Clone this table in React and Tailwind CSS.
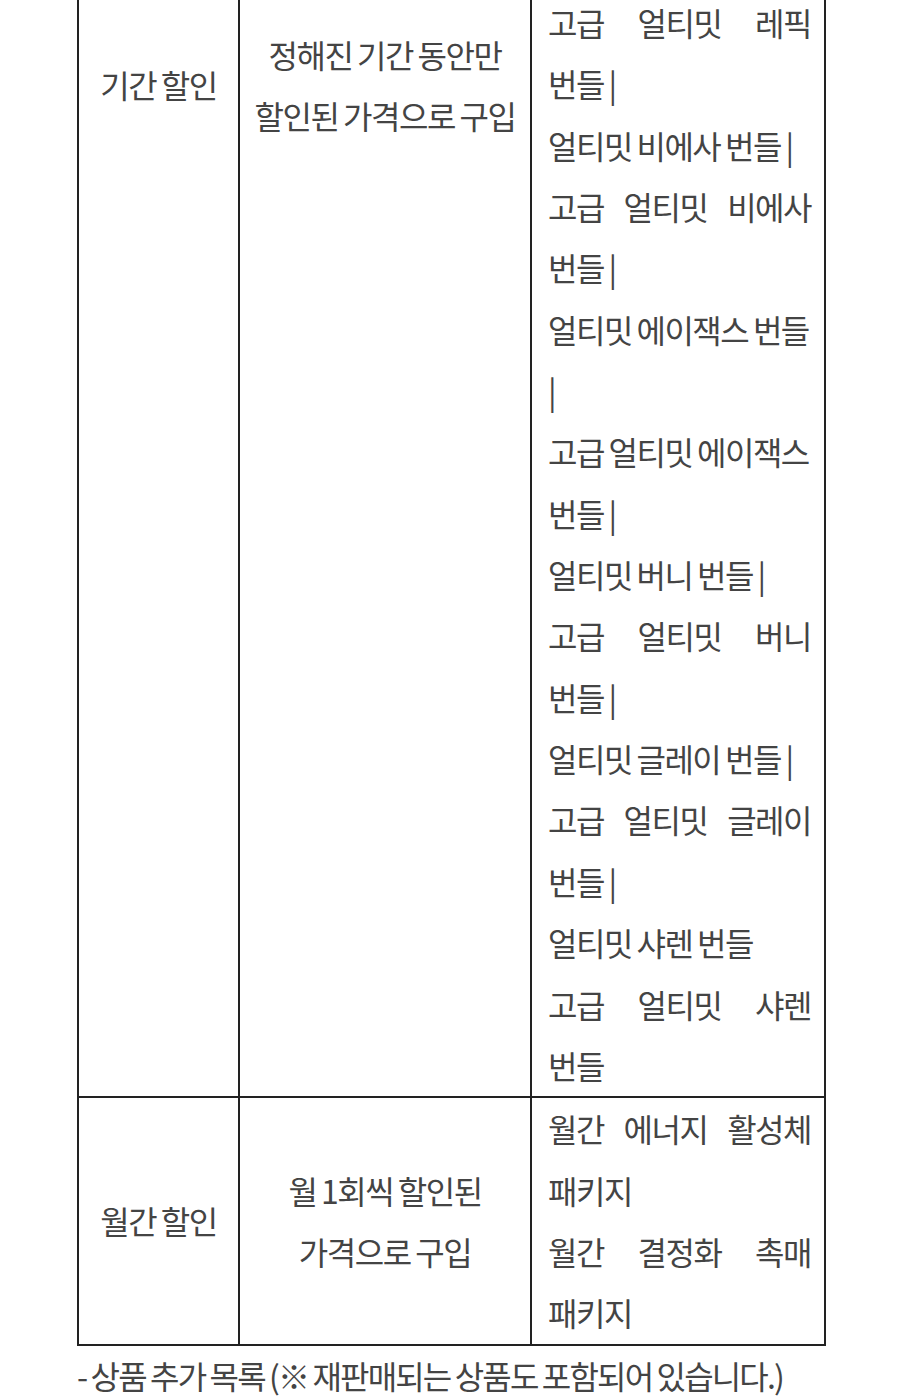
const col3Rows1 = [
  { words: ['고급', '얼티밋', '레픽'], justify: true },
  { text: '번들 |' },
  { text: '얼티밋 비에사 번들 |' },
  { words: ['고급', '얼티밋', '비에사'], justify: true },
  { text: '번들 |' },
  { text: '얼티밋 에이잭스 번들' },
  { text: '|' },
  { text: '고급 얼티밋 에이잭스' },
  { text: '번들 |' },
  { text: '얼티밋 버니 번들 |' },
  { words: ['고급', '얼티밋', '버니'], justify: true },
  { text: '번들 |' },
  { text: '얼티밋 글레이 번들 |' },
  { words: ['고급', '얼티밋', '글레이'], justify: true },
  { text: '번들 |' },
  { text: '얼티밋 샤렌 번들' },
  { words: ['고급', '얼티밋', '샤렌'], justify: true },
  { text: '번들' },
];

const col3Rows2 = [
  { words: ['월간', '에너지', '활성체'], justify: true },
  { text: '패키지' },
  { words: ['월간', '결정화', '촉매'], justify: true },
  { text: '패키지' },
];

function Lines({ rows }) {
  return rows.map((row, i) =>
    row.justify ? (
      <div key={i} className="flex justify-between">
        {row.words.map((w) => (
          <span key={w}>{w}</span>
        ))}
      </div>
    ) : (
      <div key={i} className="whitespace-nowrap">{row.text}</div>
    )
  );
}

export default function App() {
  return (
    <div
      className="w-[900px] h-[1396px] overflow-hidden bg-white text-[#444] text-[32px] leading-[61.35px] tracking-[-1.5px] [word-spacing:-1px]"
      style={{ fontFamily: '"Noto Sans CJK KR", "Noto Sans", sans-serif' }}
    >
      <div className="mt-[-8px] ml-[77px] w-[749px] border-x-2 border-b-2 border-[#222]">
        {/* 기간 할인 */}
        <div className="flex border-b-2 border-[#222]">
          <div className="w-[161px] shrink-0 border-r-2 border-[#222] pt-[62px] text-center">
            기간 할인
          </div>
          <div className="w-[292px] shrink-0 border-r-2 border-[#222] pt-[32px] text-center">
            <div>정해진 기간 동안만</div>
            <div>할인된 가격으로 구입</div>
          </div>
          <div className="flex-1 pl-[16px] pr-[13px]">
            <Lines rows={col3Rows1} />
          </div>
        </div>

        {/* 월간 할인 */}
        <div className="flex">
          <div className="w-[161px] shrink-0 border-r-2 border-[#222] flex items-center justify-center">
            월간 할인
          </div>
          <div className="w-[292px] shrink-0 border-r-2 border-[#222] flex flex-col items-center justify-center">
            <div>월 1회씩 할인된</div>
            <div>가격으로 구입</div>
          </div>
          <div className="flex-1 pl-[16px] pr-[13px]">
            <Lines rows={col3Rows2} />
          </div>
        </div>
      </div>

      <p className="ml-[77px] pt-[11px] leading-[36px] tracking-[-1.85px] whitespace-nowrap">
        - 상품 추가 목록 (※ 재판매되는 상품도 포함되어 있습니다.)
      </p>
    </div>
  );
}
